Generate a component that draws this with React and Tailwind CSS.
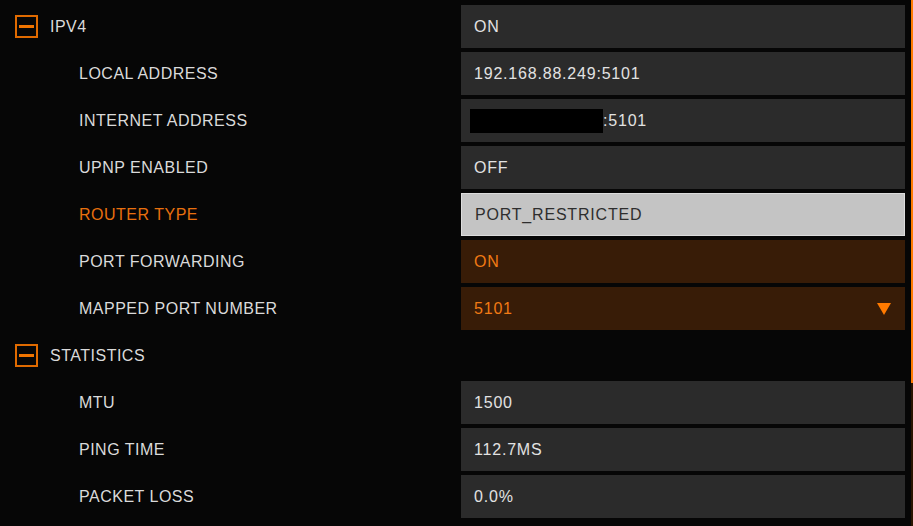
const rows = [
  { type: "section", label: "IPV4", value: "ON" },
  { type: "item", label: "LOCAL ADDRESS", value: "192.168.88.249:5101" },
  { type: "item", label: "INTERNET ADDRESS", value: ":5101", redacted: true },
  { type: "item", label: "UPNP ENABLED", value: "OFF" },
  { type: "item", label: "ROUTER TYPE", value: "PORT_RESTRICTED", state: "selected" },
  { type: "item", label: "PORT FORWARDING", value: "ON", state: "focus" },
  { type: "item", label: "MAPPED PORT NUMBER", value: "5101", state: "focus", dropdown: true },
  { type: "section", label: "STATISTICS" },
  { type: "item", label: "MTU", value: "1500" },
  { type: "item", label: "PING TIME", value: "112.7MS" },
  { type: "item", label: "PACKET LOSS", value: "0.0%" },
];

function CollapseIcon() {
  return (
    <div className="w-[23px] h-[23px] border-2 border-[#e06a00] flex items-center justify-center">
      <div className="w-[15px] h-[3px] bg-[#f07400]" />
    </div>
  );
}

function ValueBox({ row }) {
  let box = "bg-[#2b2b2b] text-[#e2e2e2]";
  if (row.state === "selected") box = "bg-[#c4c4c4] text-[#2e2e2e] border border-[#dcdcdc]";
  if (row.state === "focus") box = "bg-[#381c07] text-[#f07a14]";
  return (
    <div className={`w-[444px] h-[43px] flex items-center pl-[13px] pr-[14px] tracking-[0.8px] ${box}`}>
      {row.redacted && <span className="inline-block w-[133px] h-[24px] bg-black -ml-[4px]" />}
      <span>{row.value}</span>
      {row.dropdown && (
        <svg className="ml-auto" width="14" height="12" viewBox="0 0 14 12">
          <polygon points="0,0 14,0 7,12" fill="#ff7a00" />
        </svg>
      )}
    </div>
  );
}

function Row({ row }) {
  const labelColor = row.state === "selected" ? "text-[#e8700e]" : "text-[#dadada]";
  return (
    <div className="h-[47px] flex items-center">
      <div className="w-[461px] flex items-center tracking-[0.5px]">
        {row.type === "section" ? (
          <div className="flex items-center pl-[15px] gap-[12px]">
            <CollapseIcon />
            <span className="text-[#dadada]">{row.label}</span>
          </div>
        ) : (
          <span className={`pl-[79px] ${labelColor}`}>{row.label}</span>
        )}
      </div>
      {row.value !== undefined && <ValueBox row={row} />}
    </div>
  );
}

export default function App() {
  return (
    <div
      className="w-[913px] h-[526px] bg-[#060606] flex overflow-hidden text-[16px]"
      style={{ fontFamily: '"Liberation Sans", Arial, sans-serif' }}
    >
      <div className="w-[911px] pt-[3px]">
        {rows.map((r, i) => (
          <Row key={i} row={r} />
        ))}
      </div>
      <div className="w-[2px] h-full bg-[#2a1400] flex flex-col">
        <div className="h-[383px] bg-[#ff7a00]" />
      </div>
    </div>
  );
}
